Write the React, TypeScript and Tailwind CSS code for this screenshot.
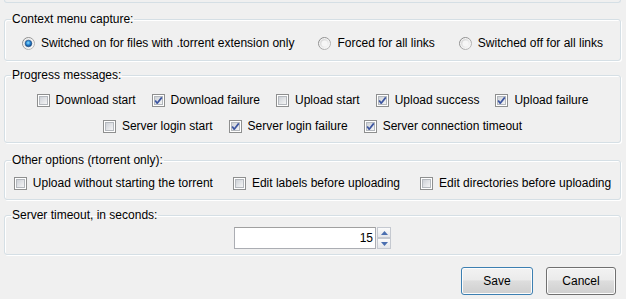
import { FC, ReactNode } from "react";
import classNames from "clsx";

const Radio: FC<{ checked?: boolean }> = ({ checked }) => (
  <svg width="13" height="13" viewBox="0 0 13 13" className="shrink-0">
    <defs>
      <linearGradient id="rdRing" x1="0" y1="0" x2="1" y2="1">
        <stop offset="0" stopColor="#7f7f7f" />
        <stop offset="1" stopColor="#c2c2c2" />
      </linearGradient>
      <linearGradient id="rdFill" x1="0" y1="0" x2="1" y2="1">
        <stop offset="0" stopColor="#d2d2d2" />
        <stop offset="1" stopColor="#fbfbfb" />
      </linearGradient>
      <radialGradient id="rdDot" cx="0.45" cy="0.4" r="0.6">
        <stop offset="0" stopColor="#8fe0ff" />
        <stop offset="0.5" stopColor="#2b8ad8" />
        <stop offset="1" stopColor="#0d3d7a" />
      </radialGradient>
    </defs>
    <circle cx="6.5" cy="6.5" r="6" fill="#f4f4f4" stroke="url(#rdRing)" />
    <circle cx="6.5" cy="6.5" r="4.6" fill="url(#rdFill)" />
    {checked ? (
      <circle cx="6.5" cy="6.5" r="3.3" fill="url(#rdDot)" stroke="#1d4f86" strokeWidth="0.6" />
    ) : (
      <circle cx="6.5" cy="6.5" r="3" fill="#f6f6f6" />
    )}
  </svg>
);

const Check: FC<{ checked?: boolean }> = ({ checked }) => (
  <svg width="13" height="13" viewBox="0 0 13 13" className="shrink-0">
    <defs>
      <linearGradient id="cbFill" x1="0" y1="0" x2="1" y2="1">
        <stop offset="0" stopColor="#cbcfd5" />
        <stop offset="1" stopColor="#f7f7f7" />
      </linearGradient>
    </defs>
    <rect x="0.5" y="0.5" width="12" height="12" fill="#fff" stroke="#8e8f8f" />
    <rect x="2.5" y="2.5" width="8" height="8" fill="url(#cbFill)" stroke="#b4b8bd" />
    {checked && (
      <path
        d="M3.2 6.6 L5.2 9.2 L9.8 3.4"
        fill="none"
        stroke="#3b54a0"
        strokeWidth="1.7"
        strokeLinejoin="round"
      />
    )}
  </svg>
);

const Option: FC<{ label: string; checked?: boolean; radio?: boolean }> = ({
  label,
  checked,
  radio,
}) => (
  <label className="flex items-center gap-[6px] h-[16px] whitespace-nowrap">
    {radio ? <Radio checked={checked} /> : <Check checked={checked} />}
    <span>{label}</span>
  </label>
);

const Group: FC<{ title: string; className?: string; children: ReactNode }> = ({
  title,
  className,
  children,
}) => (
  <fieldset
    className={classNames(
      "border border-[#d5dfe5] rounded-[3px]",
      "shadow-[inset_1px_1px_0_#fff,1px_1px_0_#fff]",
      className,
    )}
  >
    <legend className="ml-[6px] px-[1px] leading-[15px]">{title}</legend>
    {children}
  </fieldset>
);

const Button: FC<{ label: string; primary?: boolean; className?: string }> = ({
  label,
  primary,
  className,
}) => (
  <button
    className={classNames(
      "h-[28px] rounded-[3px] border",
      "bg-[linear-gradient(#f2f2f2,#ebebeb_45%,#dddddd_50%,#cfcfcf)]",
      "shadow-[inset_0_0_0_1px_#fcfcfc]",
      primary ? "border-[#3c7fb1] shadow-[inset_0_0_0_1px_#48d7ff]" : "border-[#707070]",
      className,
    )}
  >
    {label}
  </button>
);

const App: FC = () => {
  return (
    <div className="w-[626px] h-[299px] bg-[#f0f0f0] pl-[4px] pr-[5px] text-[12px] text-black font-['Liberation_Sans',Arial,sans-serif] overflow-hidden">
      <div className="h-[3px] border border-t-0 border-[#d5dfe5] rounded-b-[3px]" />

      <Group title="Context menu capture:" className="mt-[9px] pt-[8px] pb-[9px]">
        <div className="flex justify-center gap-[24px]">
          <Option radio checked label="Switched on for files with .torrent extension only" />
          <Option radio label="Forced for all links" />
          <Option radio label="Switched off for all links" />
        </div>
      </Group>

      <Group title="Progress messages:" className="mt-[7px] pt-[9px] pb-[8px]">
        <div className="flex flex-col gap-[10px]">
          <div className="flex justify-center gap-[16px]">
            <Option label="Download start" />
            <Option checked label="Download failure" />
            <Option label="Upload start" />
            <Option checked label="Upload success" />
            <Option checked label="Upload failure" />
          </div>
          <div className="flex justify-center gap-[16px]">
            <Option label="Server login start" />
            <Option checked label="Server login failure" />
            <Option checked label="Server connection timeout" />
          </div>
        </div>
      </Group>

      <Group title="Other options (rtorrent only):" className="mt-[10px] pt-[7px] pb-[8px]">
        <div className="flex justify-center gap-[20px]">
          <Option label="Upload without starting the torrent" />
          <Option label="Edit labels before uploading" />
          <Option label="Edit directories before uploading" />
        </div>
      </Group>

      <Group title="Server timeout, in seconds:" className="mt-[8px] pt-[4px] pb-[5px]">
        <div className="flex justify-center">
          <div className="flex">
            <div className="w-[142px] h-[22px] bg-white border border-[#abadb3] border-t-[#a0a0a0] flex items-center justify-end pr-[2px]">
              15
            </div>
            <div className="flex flex-col w-[14px] h-[22px] ml-px">
              {[true, false].map((up) => (
                <div
                  key={up ? "up" : "down"}
                  className="flex-1 flex items-center justify-center border border-[#c5c9d0] bg-[linear-gradient(#fbfbfb,#e4e6ea)]"
                >
                  <svg width="7" height="4" viewBox="0 0 7 4">
                    <path d={up ? "M0 4 L3.5 0 L7 4 Z" : "M0 0 L3.5 4 L7 0 Z"} fill="#4a6fb0" />
                  </svg>
                </div>
              ))}
            </div>
          </div>
        </div>
      </Group>

      <div className="flex justify-end gap-[13px] mt-[12px] pr-[5px]">
        <Button primary label="Save" className="w-[72px]" />
        <Button label="Cancel" className="w-[70px]" />
      </div>
    </div>
  );
};

export default App;
